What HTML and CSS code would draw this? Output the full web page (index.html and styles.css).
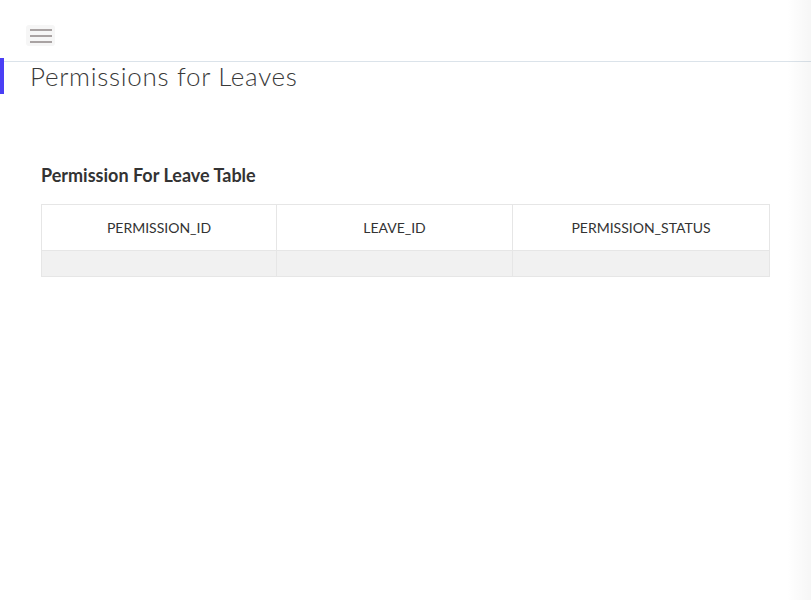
FILE: index.html
```html
<!DOCTYPE html>
<html>
<head>
<meta charset="utf-8">
<link rel="stylesheet" href="styles.css">
</head>
<body>
<div class="page">
  <header class="topbar">
    <button class="menu-btn" aria-label="menu">
      <span></span><span></span><span></span>
    </button>
  </header>
  <div class="title-row">
    <h1 class="page-title">Permissions for Leaves</h1>
  </div>
  <section class="content">
    <h2 class="table-title">Permission For Leave Table</h2>
    <table class="data-table">
      <thead>
        <tr><th class="c1">PERMISSION_ID</th><th class="c2">LEAVE_ID</th><th class="c3">PERMISSION_STATUS</th></tr>
      </thead>
      <tbody>
        <tr><td></td><td></td><td></td></tr>
      </tbody>
    </table>
  </section>
  <div class="edge-shadow"></div>
</div>
</body>
</html>
```

FILE: styles.css
```css
html, body { margin: 0; padding: 0; background: #fff; }
body { font-family: Lato, "Open Sans", sans-serif; color: #333; }
.page { position: relative; width: 811px; height: 600px; overflow: hidden; }
.topbar {
  height: 62px;
  border-bottom: 1px solid #dbe3ea;
  box-sizing: border-box;
  display: flex;
  align-items: flex-start;
  padding: 25px 0 0 26px;
}
.menu-btn {
  width: 29px; height: 21px;
  border: 0; padding: 0;
  background: #f6f6f6;
  border-radius: 3px;
  display: flex; flex-direction: column; justify-content: center; align-items: center;
  gap: 4px;
}
.menu-btn span { display: block; width: 22px; height: 2px; background: #a9a3a3; }
.title-row {
  height: 36px;
  margin-top: -4px;
  border-left: 4px solid #4a3ff5;
  padding-left: 26px;
}
.page-title {
  margin: 0;
  font-family: Lato, sans-serif;
  font-weight: 300;
  font-size: 26px;
  line-height: 36px;
  color: #3a3a3a;
  letter-spacing: 0.7px;
}
.content { padding: 0 41px; }
.table-title {
  margin: 70px 0 0 0;
  font-size: 18px;
  font-weight: 700;
  line-height: 22px;
  color: #333;
}
.data-table {
  margin-top: 18px;
  width: 729px;
  border-collapse: collapse;
  table-layout: fixed;
}
.data-table th, .data-table td { border: 1px solid #e6e6e6; }
.data-table th {
  height: 45px;
  font-weight: 400;
  font-size: 14px;
  color: #333;
  text-align: center;
  padding: 0;
}
.c1 { width: 234px; }
.c2 { width: 235px; }
.data-table td { height: 25px; background: #f1f1f1; padding: 0; }
.edge-shadow {
  position: absolute; top: 0; right: 0; width: 24px; height: 600px;
  background: linear-gradient(to right, rgba(0,0,0,0), rgba(0,0,0,0.035));
}
```
